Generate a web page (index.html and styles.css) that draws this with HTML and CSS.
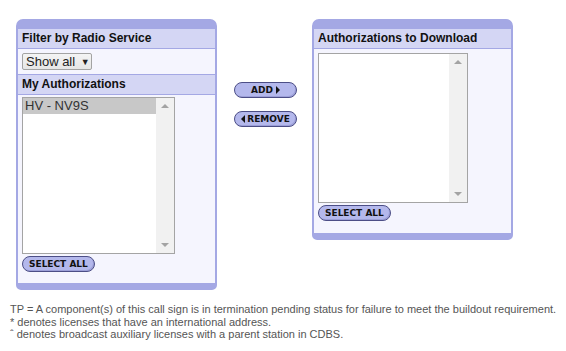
FILE: index.html
```html
<!doctype html>
<html lang="en">
  <head>
    <meta charset="UTF-8" />
    <title>Download Authorizations</title>
    <link rel="stylesheet" href="styles.css">
  </head>
  <body>
    <div class="transfer">
      <!-- Source list -->
      <div class="panel panel-left">
        <div class="band">Filter by Radio Service</div>
        <div class="row">
          <button type="button" class="dropdown">Show all <span class="caret">&#9660;</span></button>
        </div>
        <div class="band band-mid">My Authorizations</div>
        <div class="row row-list">
          <div class="listbox listbox-tall">
            <div class="options">
              <div class="option selected">HV - NV9S</div>
            </div>
            <div class="scrollbar">
              <span class="arrow arrow-up"></span>
              <span class="arrow arrow-down"></span>
            </div>
          </div>
          <button type="button" class="pill pill-select">SELECT ALL</button>
        </div>
      </div>

      <!-- Move buttons -->
      <div class="actions">
        <button type="button" class="pill pill-move">ADD <span class="tri tri-right"></span></button>
        <button type="button" class="pill pill-move"><span class="tri tri-left"></span> REMOVE</button>
      </div>

      <!-- Target list -->
      <div class="panel panel-right">
        <div class="band">Authorizations to Download</div>
        <div class="row">
          <div class="listbox listbox-short">
            <div class="options"></div>
            <div class="scrollbar">
              <span class="arrow arrow-up"></span>
              <span class="arrow arrow-down"></span>
            </div>
          </div>
          <button type="button" class="pill pill-select">SELECT ALL</button>
        </div>
      </div>
    </div>

    <div class="notes">
      <p>TP = A component(s) of this call sign is in termination pending status for failure to meet the buildout requirement.</p>
      <p>* denotes licenses that have an international address.</p>
      <p>&#710; denotes broadcast auxiliary licenses with a parent station in CDBS.</p>
    </div>
  </body>
</html>
```

FILE: styles.css
```css
body {
  margin: 8px;
  font-family: "Liberation Sans", Arial, sans-serif;
  background: white;
}

.transfer {
  display: flex;
  align-items: flex-start;
  padding-top: 11px;
  padding-left: 8px;
}

.panel {
  width: 197px;
  background: #f5f5fe;
  border: 2px solid #a4a8e4;
  border-top-width: 10px;
  border-bottom-width: 7px;
  border-radius: 7px 7px 5px 5px;
}

.panel-right {
  margin-left: 15px;
}

.band {
  background: #d4d6f4;
  border-bottom: 1px solid #a4a8e4;
  padding: 0 4px;
  height: 19px;
  line-height: 19px;
  font-size: 12px;
  font-weight: bold;
  color: #111;
}

.band-mid {
  border-top: 1px solid #a4a8e4;
  margin-top: 4px;
}

.row {
  padding: 4px 4px 0;
}

.row-list {
  padding-top: 2px;
}

.dropdown {
  display: block;
  height: 17px;
  width: 70px;
  padding: 0 0 0 3px;
  border: 1px solid #a3a3a3;
  border-radius: 2px;
  background: linear-gradient(#f4f4f4, #e6e6e6);
  font-family: "Liberation Sans", Arial, sans-serif;
  font-size: 13px;
  color: #222;
  text-align: left;
  line-height: 15px;
  white-space: nowrap;
  overflow: hidden;
}

.caret {
  font-size: 9px;
  vertical-align: 1px;
  margin-left: 2px;
}

.listbox {
  display: flex;
  border: 1px solid #a4a4a4;
  background: white;
}

.listbox-tall {
  width: 151px;
  height: 155px;
}

.listbox-short {
  width: 148px;
  height: 148px;
}

.options {
  flex: 1;
}

.option {
  height: 16px;
  line-height: 16px;
  padding-left: 2px;
  font-size: 13px;
  color: #333;
}

.option.selected {
  background: #c8c8c8;
}

.scrollbar {
  width: 18px;
  background: #f1f1f1;
  display: flex;
  flex-direction: column;
  justify-content: space-between;
  align-items: center;
  padding: 6px 0;
}

.arrow {
  width: 0;
  height: 0;
  border-left: 4px solid transparent;
  border-right: 4px solid transparent;
}

.arrow-up {
  border-bottom: 4px solid #a3a3a3;
}

.arrow-down {
  border-top: 4px solid #a3a3a3;
}

.pill {
  display: flex;
  align-items: center;
  justify-content: center;
  height: 16px;
  padding: 0 6px;
  border: 1px solid #4c4e86;
  border-radius: 8px;
  background: #b4b8ec;
  box-shadow: inset -1px -1px 0 #9c9fd8;
  font-family: "DejaVu Sans", Verdana, sans-serif;
  font-size: 9px;
  font-weight: bold;
  color: #111;
  cursor: pointer;
}

.pill-select {
  margin: 2px 0 11px;
}

.panel-right .pill-select {
  margin-bottom: 12px;
}

.actions {
  display: flex;
  flex-direction: column;
  gap: 13px;
  margin-top: 63px;
  margin-left: 17px;
}

.pill-move {
  width: 63px;
}

.tri {
  display: inline-block;
  width: 0;
  height: 0;
  border-top: 4px solid transparent;
  border-bottom: 4px solid transparent;
}

.tri-right {
  border-left: 4px solid #111;
  margin-left: 3px;
}

.tri-left {
  border-right: 4px solid #111;
  margin-right: 2px;
}

.notes {
  margin-top: 13px;
  padding-left: 2px;
  font-size: 11px;
  line-height: 12.5px;
  color: #555;
}

.notes p {
  margin: 0;
}
```
